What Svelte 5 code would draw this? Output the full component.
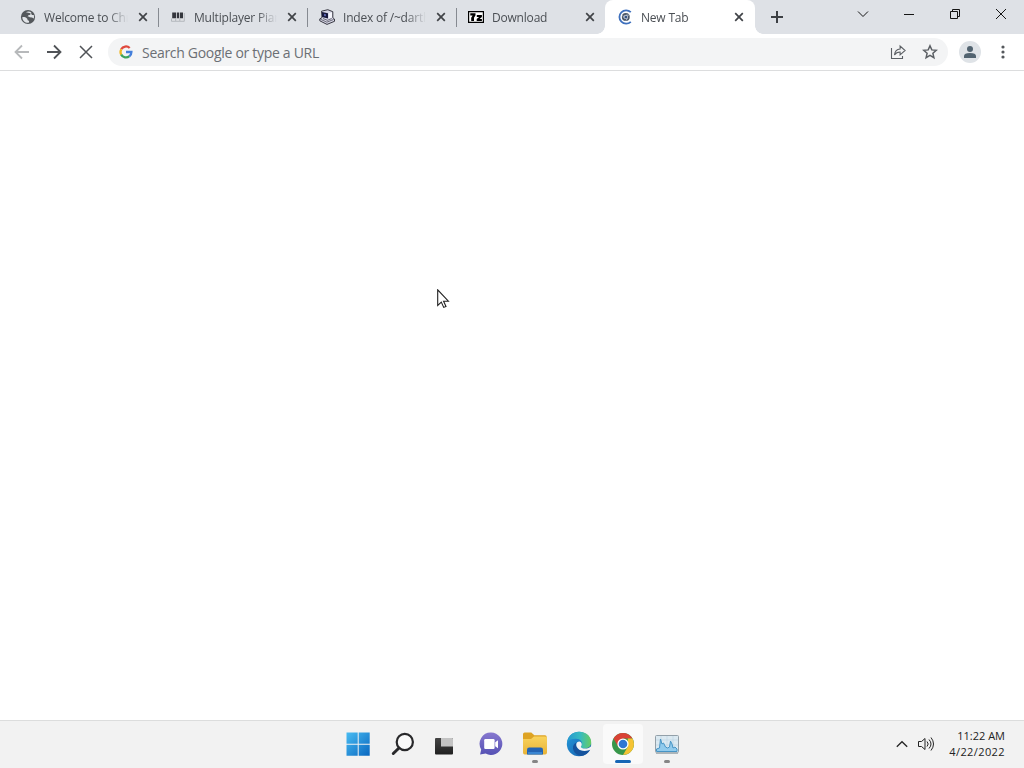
<script lang="ts">
	let tabs = [
		{ title: 'Welcome to Chrome', icon: 'globe', active: false },
		{ title: 'Multiplayer Piano', icon: 'piano', active: false },
		{ title: 'Index of /~darthnet', icon: 'computer', active: false },
		{ title: 'Download', icon: 'zip', active: false },
		{ title: 'New Tab', icon: 'newtab', active: true }
	];

	let apps = [
		{ name: 'start', state: '' },
		{ name: 'search', state: '' },
		{ name: 'taskview', state: '' },
		{ name: 'chat', state: '' },
		{ name: 'explorer', state: 'open' },
		{ name: 'edge', state: '' },
		{ name: 'chrome', state: 'focused' },
		{ name: 'monitor', state: 'open' }
	];

	let time = '11:22 AM';
	let date = '4/22/2022';
</script>

{#snippet favicon(name: string)}
	<svg class="favicon" width="16" height="16" viewBox="0 0 16 16" fill="none">
		{#if name === 'globe'}
			<circle cx="8" cy="8" r="7.1" fill="#54585c" />
			<path d="M2.3 8.2c1.7-.3 3.5.2 4.7 1.3.8.8.2 1.7 1.3 2.1.8.3 1.2 1.1.4 2.1-3.5.4-6.3-2-6.4-5.5ZM6 3.2c1.7-1.2 4-.9 5.5.3l-1.3.8.2 1.4-2 .6-.8 1.2c.8-.2 1.8-.1 2.1.8l2.3.1 1.8 1c.3-.8.3-2 0-3.3l-2-.2-.4-1.5" fill="#e1e4e8" />
		{:else if name === 'piano'}
			<path d="M1.5 3.5h12.5v9H1.5z" fill="#dfe1e4" />
			<path d="M2.2 3.5H6v5.7H2.2zM6.8 3.5h2.4v5.7H6.8zM10 3.5h3v5.7h-3z" fill="#34363d" />
			<path d="M1.5 9.5v2.8h12.8V4M5.7 9.5V12M9.8 9.5V12" stroke="#aaaeb4" stroke-width=".8" />
		{:else if name === 'computer'}
			<path d="m2.5 2.2 6.3-1.5 5 2v6l1.7 1.4v2.2L8 15.4.8 11.8V9.9L3 8.6Z" fill="#d5d5e4" stroke="#25252f" stroke-width=".9" />
			<path d="m3 3 6 1.2v5.3L3 8Z" fill="#17183c" />
			<path d="m5 4.8 2 .5v2L5 7Z" fill="#5960a8" />
			<path d="m9.7 4.2 3.3-1v5.2l-3.3 1.2Z" fill="#f6f6fc" />
			<path d="m1.4 10.2 6.5 3 6.8-2.8M4 9.5l4.5 1.8 4.2-1.8" stroke="#51515d" stroke-width=".8" />
		{:else if name === 'zip'}
			<path d="M.6 2.6h14.8v10.8H.6z" fill="#fff" stroke="#000" stroke-width="1.2" />
			<path d="M2.3 4.2h5.2v2L6 8.7v3.2H3.2V8.8l1.4-2.3H2.3zM8.8 6h5.1v2l-2.4 2h2.4v1.9H8.7V10l2.4-2H8.8z" fill="#000" />
		{:else}
			<path d="M13.8 3.2A6.7 6.7 0 1 0 13.8 12.8" stroke="#3e70bd" stroke-width="1.8" />
			<circle cx="8.8" cy="8" r="3" stroke="#4c5868" stroke-width="1.9" />
			<path d="M8.8 6.1H12M7.2 9 5.6 6.2M10.5 9l-1.7 2.7" stroke="#cbd7e7" stroke-width=".7" />
			<circle cx="8.8" cy="8" r="1.5" fill="#375586" />
		{/if}
	</svg>
{/snippet}

{#snippet appIcon(name: string)}
	<svg width="26" height="26" viewBox="0 0 26 26" fill="none">
		{#if name === 'start'}
			<path d="M.5 1.5h11.2v11.2H.5zM12.7 1.5h11v11.2h-11zM.5 13.7h11.2v11H.5zM12.7 13.7h11v11h-11z" fill="url(#win)" />
		{:else if name === 'search'}
			<circle cx="14.8" cy="11" r="8.1" fill="#fafafa" stroke="#29292b" stroke-width="2.2" />
			<path d="m9 17-5.7 5.5" stroke="#29292b" stroke-width="3" stroke-linecap="round" />
		{:else if name === 'taskview'}
			<rect x="1" y="7" width="18" height="16.5" rx="1" fill="url(#dark)" />
			<path d="M7 7h11a1 1 0 0 1 1 1v7.5H7z" fill="#c3c3c3" />
		{:else if name === 'chat'}
			<path d="M13.2 1.5a11.2 11.2 0 1 1-5.5 21l-5.6.9 1.1-5A11.2 11.2 0 0 1 13.2 1.5Z" fill="url(#purple)" />
			<rect x="6.2" y="8" width="10.4" height="10" rx="1.2" fill="#fff" />
			<path d="m17.2 11.3 2.8-2v8l-2.8-2Z" fill="#fff" />
		{:else if name === 'explorer'}
			<path d="M1 3.3Q1 1.6 2.7 1.6h6.6l3 2.6H23q1.7 0 1.7 1.7v6H1Z" fill="#dea323" />
			<path d="M1 8h8l3-2.6h11q2 0 2 1.8v14.3q0 1.9-1.9 1.9H2.7q-1.7 0-1.7-1.9Z" fill="url(#folder)" />
			<path d="M5 23.4v-4.7q0-2.2 2.2-2.2h11.6q2.2 0 2.2 2.2v4.7Z" fill="#2464b3" />
			<path d="M6 21h14v2.4H6z" fill="#3a86d2" />
		{:else if name === 'edge'}
			<circle cx="13" cy="13" r="12.2" fill="url(#edgeblue)" />
			<path d="M1 12C2 4.7 7 .8 13 .8c8 0 12.2 5.4 12.2 10.5 0 4.1-3 6.2-6.6 6.2-2.8 0-4.3-.8-3.6-2 2.7-4.4-.7-7.7-5.2-7.7C5 7.8 2 9.3 1 12Z" fill="url(#edgegreen)" />
			<path d="M9.1 12.2C4.5 15.5 7.7 24 15 25c4.2-.5 7.5-2.8 9.2-6.2-4.5 2.1-12.8 1.7-14-4.5-.2-1 .1-1.8.5-2.7Z" fill="#15539d" />
			<path d="M11.2 11.3c-2.2 2.4-.3 6.7 3.5 8 3.5 1.2 7 .7 10.4-1l.5-3.3c-2.8 3-9 3.5-10.8.9.3-1 1.1-1.3.9-3-.2-2.1-2.3-3.4-4.5-1.6Z" fill="#f2f3f4" />
		{:else if name === 'chrome'}
			<circle cx="13" cy="13" r="11" fill="#38974b" />
			<path d="M3.5 7.5A11 11 0 0 1 22.5 7.5H13L8.2 15.7Z" fill="#d94235" />
			<path d="M22.5 7.5A11 11 0 0 1 13 24l4.8-8.2V7.5Z" fill="#f5c334" />
			<circle cx="13" cy="13" r="5.6" fill="#fff" />
			<circle cx="13" cy="13" r="4.3" fill="#3077d4" />
		{:else}
			<rect x="1.5" y="4.5" width="23" height="17" rx="1" fill="#dbe9f1" stroke="#93a0a9" />
			<path d="M2 9h22M2 14h22M7 5v16M13 5v16M19 5v16" stroke="#bdd5e2" stroke-width=".6" />
			<path d="m2.5 18 3-1 1-9 1.5 5 1.5-1 2 4 2 1 2-1 1-6 1.5 3 1 4 2-1 2 2v2.5H2.5Z" fill="#91cbed" stroke="#4794c5" />
			<path d="M2 22h22" stroke="#acb5ba" stroke-width="2" />
		{/if}
	</svg>
{/snippet}

<svg class="defs" width="0" height="0">
	<defs>
		<linearGradient id="win" gradientUnits="userSpaceOnUse" x1="1" y1="1" x2="25" y2="25"><stop stop-color="#49bcf2" /><stop offset="1" stop-color="#0764be" /></linearGradient>
		<linearGradient id="dark" x2="0" y2="1"><stop stop-color="#454545" /><stop offset="1" stop-color="#202020" /></linearGradient>
		<linearGradient id="purple" x2="0" y2="1"><stop stop-color="#8778cf" /><stop offset="1" stop-color="#5551b4" /></linearGradient>
		<linearGradient id="folder" x2="0" y2="1"><stop stop-color="#f9d35c" /><stop offset="1" stop-color="#e8b338" /></linearGradient>
		<linearGradient id="edgegreen"><stop stop-color="#2697d0" /><stop offset=".55" stop-color="#37bbc0" /><stop offset="1" stop-color="#68cc61" /></linearGradient>
		<linearGradient id="edgeblue" x2="1" y2="1"><stop stop-color="#249bdc" /><stop offset="1" stop-color="#155aa9" /></linearGradient>
	</defs>
</svg>

<div class="desktop">
	<header class="tabstrip">
		{#each tabs as tab}
			<div class="tab" class:active={tab.active} class:first={tab.icon === 'globe'}>
				{@render favicon(tab.icon)}
				<span class="title">{tab.title}</span>
				<svg class="close" width="10" height="10" viewBox="0 0 10 10"><path d="m1.2 1.2 7.6 7.6m0-7.6L1.2 8.8" stroke="#404347" stroke-width="1.7" /></svg>
			</div>
		{/each}
		<svg class="plus" width="14" height="14" viewBox="0 0 14 14"><path d="M7 1v12M1 7h12" stroke="#3d4044" stroke-width="2" /></svg>
		<div class="window-controls">
			<svg viewBox="0 0 16 16"><path d="m3 5.5 5 5 5-5" /></svg>
			<svg viewBox="0 0 16 16"><path d="M3 8.5h10" /></svg>
			<svg viewBox="0 0 16 16"><path d="M3.5 5.5h7v7h-7zM5.5 5.5v-2h7v7h-2" /></svg>
			<svg viewBox="0 0 16 16"><path d="m3 3 10 10m0-10L3 13" /></svg>
		</div>
	</header>

	<div class="toolbar">
		<svg class="nav back" viewBox="0 0 16 16"><path d="M15 8H2m6-6.5L1.5 8 8 14.5" /></svg>
		<svg class="nav" viewBox="0 0 16 16"><path d="M1 8h13M8 1.5 14.5 8 8 14.5" /></svg>
		<svg class="nav stop" viewBox="0 0 16 16"><path d="m2 2 12 12m0-12L2 14" /></svg>
		<div class="omnibox">
			<svg class="google" width="14" height="14" viewBox="0 0 14 14" fill="none" stroke-width="2.3">
				<path d="M2.2 4.3A5.4 5.4 0 0 1 10.7 3" stroke="#df493d" />
				<path d="M2.3 9.7a5.4 5.4 0 0 1 0-5.4" stroke="#efb51f" />
				<path d="M10.4 11.2A5.4 5.4 0 0 1 2.2 9.6" stroke="#3aa45b" />
				<path d="M7 7h5.4c0 1.9-.7 3.3-2 4.2" stroke="#437fdb" />
			</svg>
			<span class="placeholder">Search Google or type a URL</span>
			<svg class="action" viewBox="0 0 16 16"><path d="M1.5 4v10.5h11V12M4.5 11c.4-3.8 2.2-5.7 5.6-6V2l5 4.5-5 4.4V8c-2.7 0-4.3.9-5.6 3Z" stroke-width="1.1" /></svg>
			<svg class="action star" viewBox="0 0 16 16"><path d="m8 1.8 1.8 4.1 4.5.4-3.4 3 1 4.4L8 11.4l-3.9 2.3 1-4.4-3.4-3 4.5-.4Z" stroke-width="1.5" /></svg>
		</div>
		<div class="avatar">
			<svg width="14" height="14" viewBox="0 0 14 14" fill="#526370"><circle cx="7" cy="4" r="3" /><path d="M1 13v-2q0-3 6-3t6 3v2Z" /></svg>
		</div>
		<svg class="more" width="4" height="16" viewBox="0 0 4 16" fill="#55585c"><circle cx="2" cy="3" r="1.6" /><circle cx="2" cy="8" r="1.6" /><circle cx="2" cy="13" r="1.6" /></svg>
	</div>

	<main>
		<svg class="cursor" width="13" height="20" viewBox="0 0 13 20"><path d="M.7.8v15.6l3.6-3.3 2.4 5.3 2.3-1-2.4-5.2h4.8Z" fill="#fff" stroke="#202020" stroke-width="1.1" /></svg>
	</main>

	<footer>
		<div class="apps">
			{#each apps as app}
				<div class="app {app.state}">{@render appIcon(app.name)}</div>
			{/each}
		</div>
		<div class="tray">
			<svg width="12" height="8" viewBox="0 0 12 8"><path d="m.8 6.7 5.2-5 5.2 5" /></svg>
			<svg class="volume" width="18" height="16" viewBox="0 0 18 16"><path d="M1.5 5.5h3L8 2.5v11l-3.5-3h-3ZM10 5.5q2.4 2.5 0 5M12 3.5q4 4.5 0 9M14 1.5q5 6.5 0 13" /></svg>
			<div class="clock"><span>{time}</span><span class="date">{date}</span></div>
		</div>
	</footer>
</div>

<style>
	:global(body) {
		overflow: hidden;
	}

	.defs {
		position: absolute;
	}

	.desktop {
		display: flex;
		flex-direction: column;
		width: 1024px;
		height: 768px;
		background: #fff;
		font-family: 'Open Sans', 'Noto Sans', sans-serif;
	}

	.tabstrip {
		display: flex;
		height: 34px;
		padding-left: 9px;
		box-sizing: border-box;
		background: #dee1e6;
	}

	.tab {
		position: relative;
		display: flex;
		align-items: center;
		width: 149px;
		height: 34px;
		padding: 0 10px 0 12px;
		box-sizing: border-box;
		color: #4b4f54;
		font-size: 12px;
	}

	.tab.first {
		padding-left: 11px;
	}

	.tab:not(.first, .active)::before {
		content: '';
		position: absolute;
		left: 0;
		top: 8px;
		width: 1px;
		height: 19px;
		background: #868a91;
	}

	.tab.active {
		width: 150px;
		padding-right: 11px;
		background: #fff;
		border-radius: 8px 8px 0 0;
	}

	.active::before,
	.active::after {
		content: '';
		position: absolute;
		bottom: 0;
		width: 8px;
		height: 8px;
	}

	.active::before {
		left: -8px;
		background: radial-gradient(circle at 0 0, transparent 7.5px, #fff 8px);
	}

	.active::after {
		right: -8px;
		background: radial-gradient(circle at 100% 0, transparent 7.5px, #fff 8px);
	}

	.title {
		flex: 1;
		margin-left: 8px;
		overflow: hidden;
		letter-spacing: -0.2px;
		white-space: nowrap;
		mask-image: linear-gradient(to right, #000 76%, transparent);
	}

	.favicon,
	.close {
		flex: none;
	}

	.close {
		margin-left: 10px;
	}

	.plus {
		margin: 10px 0 0 15px;
	}

	.window-controls {
		display: flex;
		gap: 30px;
		margin: 6px 15px 0 auto;
	}

	.window-controls svg {
		width: 16px;
		height: 16px;
		fill: none;
		stroke: #151515;
		stroke-width: 1;
	}

	.toolbar {
		display: flex;
		align-items: center;
		height: 37px;
		padding: 0 19px 0 14px;
		box-sizing: border-box;
		border-bottom: 1px solid #dcddde;
	}

	.nav {
		width: 16px;
		height: 16px;
		margin-right: 16px;
		fill: none;
		stroke: #505357;
		stroke-width: 1.8;
	}

	.stop {
		stroke-width: 1.5;
	}

	.back {
		stroke: #b7b9bb;
	}

	.omnibox {
		display: flex;
		align-items: center;
		width: 840px;
		height: 28px;
		margin-left: -2px;
		padding: 0 10px 0 11px;
		box-sizing: border-box;
		border-radius: 14px;
		background: #f3f4f5;
	}

	.placeholder {
		margin: 0 auto 0 9px;
		color: #6b6f74;
		font-size: 14px;
		letter-spacing: -0.3px;
		white-space: nowrap;
	}

	.action {
		width: 16px;
		height: 16px;
		margin-left: 16px;
		fill: none;
		stroke: #5b5f64;
	}

	.avatar {
		display: flex;
		align-items: center;
		justify-content: center;
		width: 22px;
		height: 22px;
		margin-left: 11px;
		border-radius: 50%;
		background: #dfe3e7;
	}

	.more {
		margin-left: auto;
	}

	main {
		position: relative;
		flex: 1;
	}

	.cursor {
		position: absolute;
		left: 437px;
		top: 218px;
	}

	footer {
		display: flex;
		height: 48px;
		padding-left: 339px;
		box-sizing: border-box;
		border-top: 1px solid #dcdddd;
		background: #f2f2f2;
	}

	.apps {
		display: flex;
		gap: 4px;
	}

	.app {
		position: relative;
		display: flex;
		align-items: center;
		justify-content: center;
		width: 40px;
		height: 40px;
		margin-top: 3px;
		border-radius: 4px;
	}

	.focused {
		background: #fafafa;
	}

	.open::after,
	.focused::after {
		content: '';
		position: absolute;
		left: 17px;
		bottom: 1px;
		width: 6px;
		height: 3px;
		border-radius: 2px;
		background: #858585;
	}

	.focused::after {
		left: 12px;
		width: 16px;
		background: #1766b5;
	}

	.tray {
		display: flex;
		align-items: center;
		margin-left: auto;
		padding: 0 19px 2px 0;
	}

	.tray svg {
		fill: none;
		stroke: #252525;
		stroke-width: 1.3;
	}

	.tray .volume {
		margin-left: 9px;
		stroke-width: 1;
	}

	.clock {
		display: flex;
		flex-direction: column;
		width: 58px;
		margin-left: 12px;
		color: #222;
		font-size: 11px;
		line-height: 16px;
		text-align: right;
		white-space: nowrap;
	}

	.date {
		letter-spacing: 0.4px;
	}
</style>
